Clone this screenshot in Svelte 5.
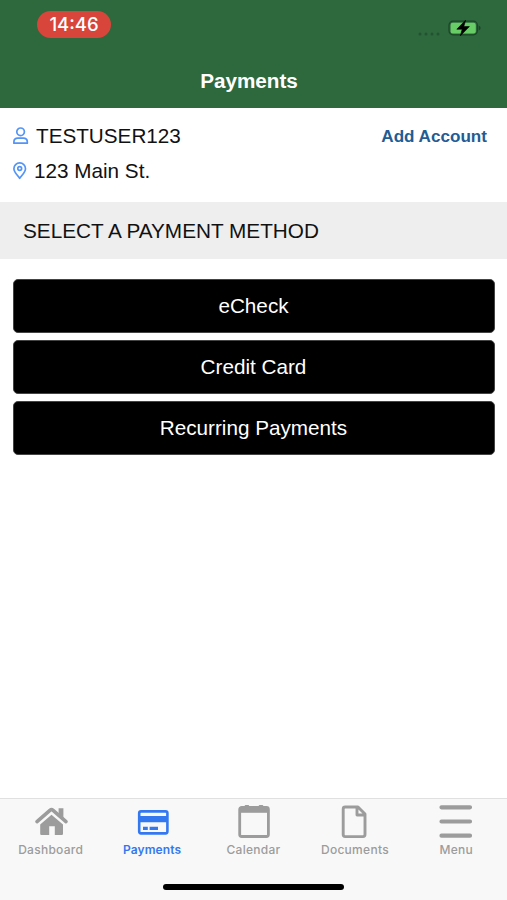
<script lang="ts">
	type Icon = 'home' | 'card' | 'calendar' | 'document' | 'menu';

	const methods = ['eCheck', 'Credit Card', 'Recurring Payments'];
	const tabs: { label: string; icon: Icon }[] = [
		{ label: 'Dashboard', icon: 'home' },
		{ label: 'Payments', icon: 'card' },
		{ label: 'Calendar', icon: 'calendar' },
		{ label: 'Documents', icon: 'document' },
		{ label: 'Menu', icon: 'menu' }
	];

	let active = $state('Payments');
</script>

<div class="screen">
	<header>
		<div class="status">
			<span class="time">14:46</span>
			<div class="indicators">
				<svg class="signal" width="22" height="4" viewBox="0 0 22 4">
					<circle cx="2" cy="2" r="1.5" />
					<circle cx="8" cy="2" r="1.5" />
					<circle cx="14" cy="2" r="1.5" />
					<circle cx="20" cy="2" r="1.5" />
				</svg>
				<svg width="33" height="18" viewBox="0 0 33 18">
					<rect x="1" y="2.2" width="28.4" height="13.6" rx="4" fill="none" stroke="#1b4526" stroke-width="1.2" />
					<rect x="2.6" y="3.8" width="25.2" height="10.6" rx="2.2" fill="#68cd67" />
					<path d="M30.6 6.5q2 .8 2 2.5t-2 2.5z" fill="#1b4526" />
					<path d="M17.6 1.2 8.8 10.2h5.4l-1.8 6.6 9-9.2h-5.6z" fill="#000" stroke="#000" stroke-width=".6" />
				</svg>
			</div>
		</div>
		<h1>Payments</h1>
	</header>

	<section class="account">
		<div class="row user">
			<svg width="16" height="18" viewBox="0 0 16 18">
				<circle cx="7.6" cy="4.8" r="3.8" />
				<path d="M.9 16.2V15c0-2.400 1.800-3.800 4-3.800h5.400c2.300 0 4 1.400 4 3.800v1.200z" />
			</svg>
			<span>TESTUSER123</span>
			<button class="add">Add Account</button>
		</div>
		<div class="row address">
			<svg width="14" height="18" viewBox="0 0 14 18">
				<path d="M6.700 16.400C5 13.700.9 10.200.9 6.700a5.800 5.800 0 0 1 11.600 0c0 3.500-4.100 7-5.800 9.700z" />
				<circle cx="6.700" cy="6.500" r="1.900" />
			</svg>
			<span>123 Main St.</span>
		</div>
	</section>

	<h2>SELECT A PAYMENT METHOD</h2>

	<main>
		{#each methods as method}
			<button class="method">{method}</button>
		{/each}
	</main>

	<nav>
		<div class="tabs">
			{#each tabs as tab}
				<button class="tab" class:active={active === tab.label} onclick={() => (active = tab.label)}>
					<svg width="36" height="36" viewBox="0 0 36 36">
						{#if tab.icon === 'home'}
							<path d="M4 17.600 17.200 6.100a2 2 0 0 1 2.600 0L33 17.600" fill="none" stroke="currentColor" stroke-width="3.600" stroke-linecap="round" />
							<path d="M25.600 4.200h4.800v11.300l-4.800-4.200z" />
							<path d="M18.500 10.800 30 20.600v9.200a1.200 1.200 0 0 1-1.200 1.200h-7v-8.800h-5.600V31H8.400a1.200 1.200 0 0 1-1.200-1.200v-9.200z" />
						{:else if tab.icon === 'card'}
							<rect x="5.200" y="7.400" width="28.200" height="22" rx="1.800" fill="none" stroke="currentColor" stroke-width="2.600" />
							<path d="M4.500 12.100h29.500v6.200H4.500zM9 22.800h4.800v3.200H9zM15.600 22.800h8.400v3.200h-8.400z" />
						{:else if tab.icon === 'calendar'}
							<rect x="3.700" y="3.500" width="28.700" height="29" rx="2" fill="none" stroke="currentColor" stroke-width="2.800" />
							<path d="M3.500 3.200h29v5.600h-29z" />
							<rect x="8.600" y="1" width="4.600" height="3" rx="1" />
							<rect x="22.700" y="1" width="4.600" height="3" rx="1" />
						{:else if tab.icon === 'document'}
							<path d="M8.200 3H21l7 7v20.600a2 2 0 0 1-2 2H8.200a2 2 0 0 1-2-2V5a2 2 0 0 1 2-2zM20 3v8h8" fill="none" stroke="currentColor" stroke-width="2.900" stroke-linejoin="round" />
						{:else}
							<path d="M3.500 3.300h28.500M3.500 17.500h28.500M3.500 31.700h28.500" fill="none" stroke="currentColor" stroke-width="4.200" stroke-linecap="round" />
						{/if}
					</svg>
					<span>{tab.label}</span>
				</button>
			{/each}
		</div>
		<div class="home-indicator"></div>
	</nav>
</div>

<style>
	.screen {
		display: flex;
		flex-direction: column;
		height: 900px;
		background: #fff;
		color: #111;
		font-family: 'Liberation Sans', Arial, sans-serif;
	}
	button {
		padding: 0;
		border: none;
		background: none;
		font-family: inherit;
		cursor: pointer;
	}

	/* header */

	header {
		height: 108px;
		background: #2e683d;
		color: #fff;
	}
	.status {
		display: flex;
		justify-content: space-between;
		height: 65px;
		padding: 11px 26px 0 37px;
		box-sizing: border-box;
	}
	.time {
		width: 74px;
		height: 27px;
		border-radius: 14px;
		background: #d8453b;
		font: 500 18.5px/27px Inter, sans-serif;
		text-align: center;
	}
	.indicators {
		display: flex;
		align-items: flex-start;
		gap: 8px;
		padding-top: 8px;
	}
	.signal {
		margin-top: 13px;
		fill: #225331;
	}
	h1 {
		margin: 4px 0 0;
		padding-right: 9px;
		font-size: 20.7px;
		line-height: 24px;
		text-align: center;
	}

	/* account */

	.account {
		height: 94px;
		padding: 10px 20px 0 13px;
		box-sizing: border-box;
		font-size: 20.7px;
	}
	.row {
		display: flex;
		align-items: center;
		height: 35px;
	}
	.row svg {
		fill: none;
		stroke: #5394f5;
		stroke-width: 1.7;
		stroke-linejoin: round;
	}
	.user svg {
		margin-right: 7px;
	}
	.address svg {
		margin-right: 7px;
	}
	.add {
		margin: 2px 0 0 auto;
		color: #235c93;
		font-size: 17.1px;
		font-weight: bold;
	}

	/* payment methods */

	h2 {
		margin: 0;
		height: 57px;
		padding-left: 23px;
		background: #eee;
		font-size: 20.75px;
		font-weight: normal;
		line-height: 57px;
	}
	main {
		display: flex;
		flex: 1;
		flex-direction: column;
		gap: 7px;
		padding: 20px 12px 0 13px;
	}
	.method {
		height: 54px;
		padding-right: 1px;
		border: 1px solid #444;
		border-radius: 5px;
		background: #000;
		color: #fff;
		font-size: 20.7px;
	}

	/* tab bar */

	nav {
		display: flex;
		flex-direction: column;
		align-items: center;
		height: 102px;
		border-top: 1px solid #e0e0e0;
		box-sizing: border-box;
		background: #f8f8f8;
	}
	.tabs {
		display: flex;
		width: 100%;
		padding-top: 5px;
	}
	.tab {
		display: flex;
		flex: 1;
		flex-direction: column;
		align-items: center;
		color: #9c9c9c;
		font: 500 12px/20px Inter, sans-serif;
		letter-spacing: 0.28px;
	}
	.tab svg {
		fill: currentColor;
	}
	.tab.active {
		color: #3478f0;
	}
	.tab.active span {
		font-weight: 600;
		letter-spacing: 0.1px;
	}
	.home-indicator {
		width: 181px;
		height: 6px;
		margin-top: 24px;
		border-radius: 3px;
		background: #000;
	}
</style>
